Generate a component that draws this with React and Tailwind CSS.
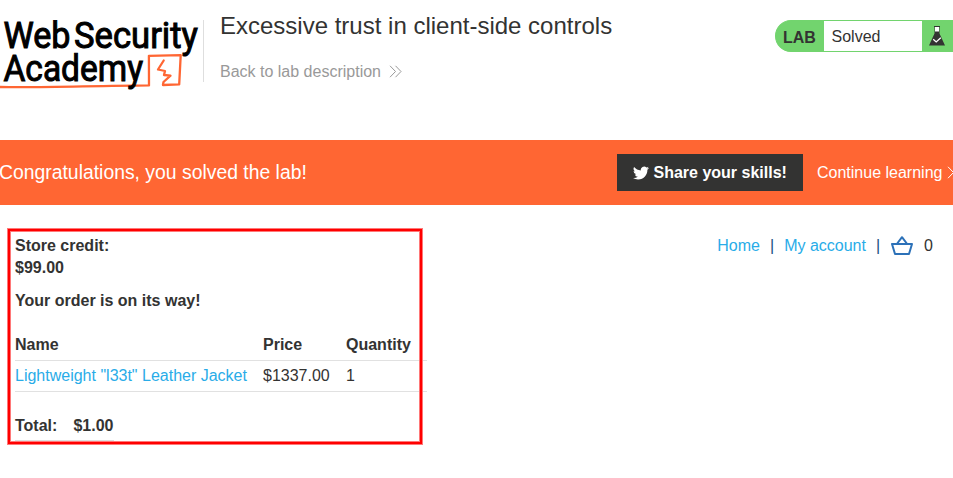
function Logo() {
  return (
    <svg className="block h-[80px] w-[203px] shrink-0" viewBox="0 0 203 80" fill="none" role="img" aria-label="Web Security Academy">
      <g fill="#000" stroke="#000" strokeWidth="1" fontFamily="Roboto, sans-serif" fontWeight="400" fontSize="36.5">
        <text x="3.5" y="28.3" textLength="67" lengthAdjust="spacingAndGlyphs">Web</text>
        <text x="74" y="28.3" textLength="124" lengthAdjust="spacingAndGlyphs">Security</text>
      </g>
      <path d="M0 67C38 68 88 65.9 149 65.4L148.9 35.8L180.7 35.2L179.2 64.4L163 65" stroke="#ff6633" strokeWidth="2.3" strokeLinejoin="round" strokeLinecap="round" />
      <path d="M163.7 40.5L158 49.5L165 51L164 55L170.5 55.7L163.5 62L163 64.6" stroke="#ff6633" strokeWidth="2.3" strokeLinejoin="round" strokeLinecap="round" />
      <text x="3.5" y="60.7" fill="#000" stroke="#000" strokeWidth="1" fontFamily="Roboto, sans-serif" fontWeight="400" fontSize="36.5" textLength="139.5" lengthAdjust="spacingAndGlyphs">Academy</text>
    </svg>
  );
}

function Chevrons({ className }) {
  return (
    <svg className={className} viewBox="0 0 13 13" fill="none" stroke="currentColor" strokeWidth="1">
      <path d="M1 .8L6.5 6.5L1 12.2M6.5 .8L12 6.5L6.5 12.2" />
    </svg>
  );
}

function LabStatus() {
  return (
    <div className="mt-5 ml-auto flex h-8 w-[178px] shrink-0 overflow-hidden rounded-l-full rounded-r-[10px] border border-[#72d46e] bg-[#72d46e] text-[#333332]">
      <span className="w-12 shrink-0 pt-1 pl-[7px] font-bold leading-[25px]">LAB</span>
      <span className="w-[98px] shrink-0 bg-white pt-[3px] pl-[7.5px] leading-[25px]">Solved</span>
      <svg className="mt-[5px] ml-[7px] h-5 w-4 shrink-0" viewBox="0 0 16 20">
        <path d="M5.5 .5h5v7L16 19.5H0L5.5 7.5z" fill="#333332" />
        <path d="M6 1h4v4.5H6z" fill="#fff" />
        <path d="M5 .5h6" stroke="#333332" />
        <path d="M4.2 13.2l3 2.7 4.6-4.2" fill="none" stroke="#fff" strokeWidth="1.3" />
      </svg>
    </div>
  );
}

function Twitter() {
  return (
    <svg className="mt-px mr-[4.5px] h-4 w-4" viewBox="0 0 24 24" fill="#fff">
      <path d="M23.95 4.57a10 10 0 0 1-2.82.77 4.96 4.96 0 0 0 2.16-2.72c-.95.56-2 .97-3.12 1.19a4.92 4.92 0 0 0-8.38 4.48C7.69 8.09 4.07 6.13 1.64 3.16a4.92 4.92 0 0 0 1.52 6.57 4.9 4.9 0 0 1-2.23-.61v.06a4.92 4.92 0 0 0 3.95 4.83 5 5 0 0 1-2.21.08 4.94 4.94 0 0 0 4.6 3.42A9.87 9.87 0 0 1 0 19.54a13.99 13.99 0 0 0 7.55 2.21c9.05 0 14-7.5 14-13.98v-.64a9.94 9.94 0 0 0 2.4-2.56z" />
    </svg>
  );
}

function Basket() {
  return (
    <svg className="ml-[11px] h-5 w-[22px]" viewBox="0 0 22 20" fill="none" stroke="#2c71b8" strokeWidth="2">
      <path d="M1 8h20l-3 10H4zM6.2 7.5L11 1.2l4.8 6.3" strokeLinejoin="round" />
    </svg>
  );
}

export default function App() {
  return (
    <div className="h-[478px] w-[953px] overflow-hidden bg-white font-['Liberation_Sans',Arial,sans-serif] text-base text-[#333332]">
      <header className="flex h-[140px] items-start">
        <div className="pt-5"><Logo /></div>
        <div className="mt-5 h-[62px] w-px shrink-0 bg-[#dedede]" />
        <div className="pt-[11px] pl-4">
          <h1 className="text-2xl leading-[30px] whitespace-nowrap">Excessive trust in client-side controls</h1>
          <a className="mt-5 flex items-center leading-[22px] text-[#999]">
            Back to lab description
            <Chevrons className="-mt-[2px] ml-2 h-[13px] w-[13px]" />
          </a>
        </div>
        <LabStatus />
      </header>

      <section className="flex h-[65px] items-center bg-[#ff6633] text-white">
        <p className="-ml-px w-[618px] shrink-0 text-[19.36px]">Congratulations, you solved the lab!</p>
        <button className="flex h-[37px] w-[186px] shrink-0 items-center bg-[#333332] pl-4 font-bold whitespace-nowrap">
          <Twitter />Share your skills!
        </button>
        <a className="flex shrink-0 items-center pl-[14px] whitespace-nowrap">
          Continue learning
          <Chevrons className="ml-[5px] h-[13px] w-[13px]" />
        </a>
      </section>

      <main className="flex items-start justify-between pt-[23px] pr-5 pl-[7px]">
        <section className="relative h-[217px] w-[416px] pt-[7px] pl-2">
          <p className="font-bold leading-[22px]">Store credit:<br />$99.00</p>
          <p className="mt-[11px] font-bold leading-[22px]">Your order is on its way!</p>
          <table className="mt-[17px] w-[412px] table-fixed border-collapse text-left">
            <colgroup>
              <col className="w-[248px]" />
              <col className="w-[83px]" />
              <col className="w-[81px]" />
            </colgroup>
            <tbody>
              <tr className="h-[31px] border-b border-[#e1e1e1]">
                <th className="pt-px font-bold">Name</th>
                <th className="pt-px font-bold">Price</th>
                <th className="pt-px font-bold">Quantity</th>
              </tr>
              <tr className="h-[31px] border-b border-[#e1e1e1]">
                <td><a className="whitespace-nowrap text-[#29ace8]">Lightweight "l33t" Leather Jacket</a></td>
                <td>$1337.00</td>
                <td>1</td>
              </tr>
            </tbody>
          </table>
          <div className="mt-[18px] flex h-[31px] w-[98.5px] items-center justify-between border-b border-[#dedede] pt-[2px] font-bold">
            <span>Total:</span><span>$1.00</span>
          </div>
          <div className="pointer-events-none absolute inset-0 border-4 border-[#ff7878]">
            <div className="absolute -inset-[3px] border-2 border-[#ff0000]" />
          </div>
        </section>
        <nav className="flex items-center pt-[6px] leading-6">
          <a className="text-[#29ace8]">Home</a>
          <span className="mx-[10px] text-[#20517e]">|</span>
          <a className="text-[#29ace8]">My account</a>
          <span className="ml-[10px] text-[#20517e]">|</span>
          <Basket />
          <span className="ml-[11px]">0</span>
        </nav>
      </main>
    </div>
  );
}
